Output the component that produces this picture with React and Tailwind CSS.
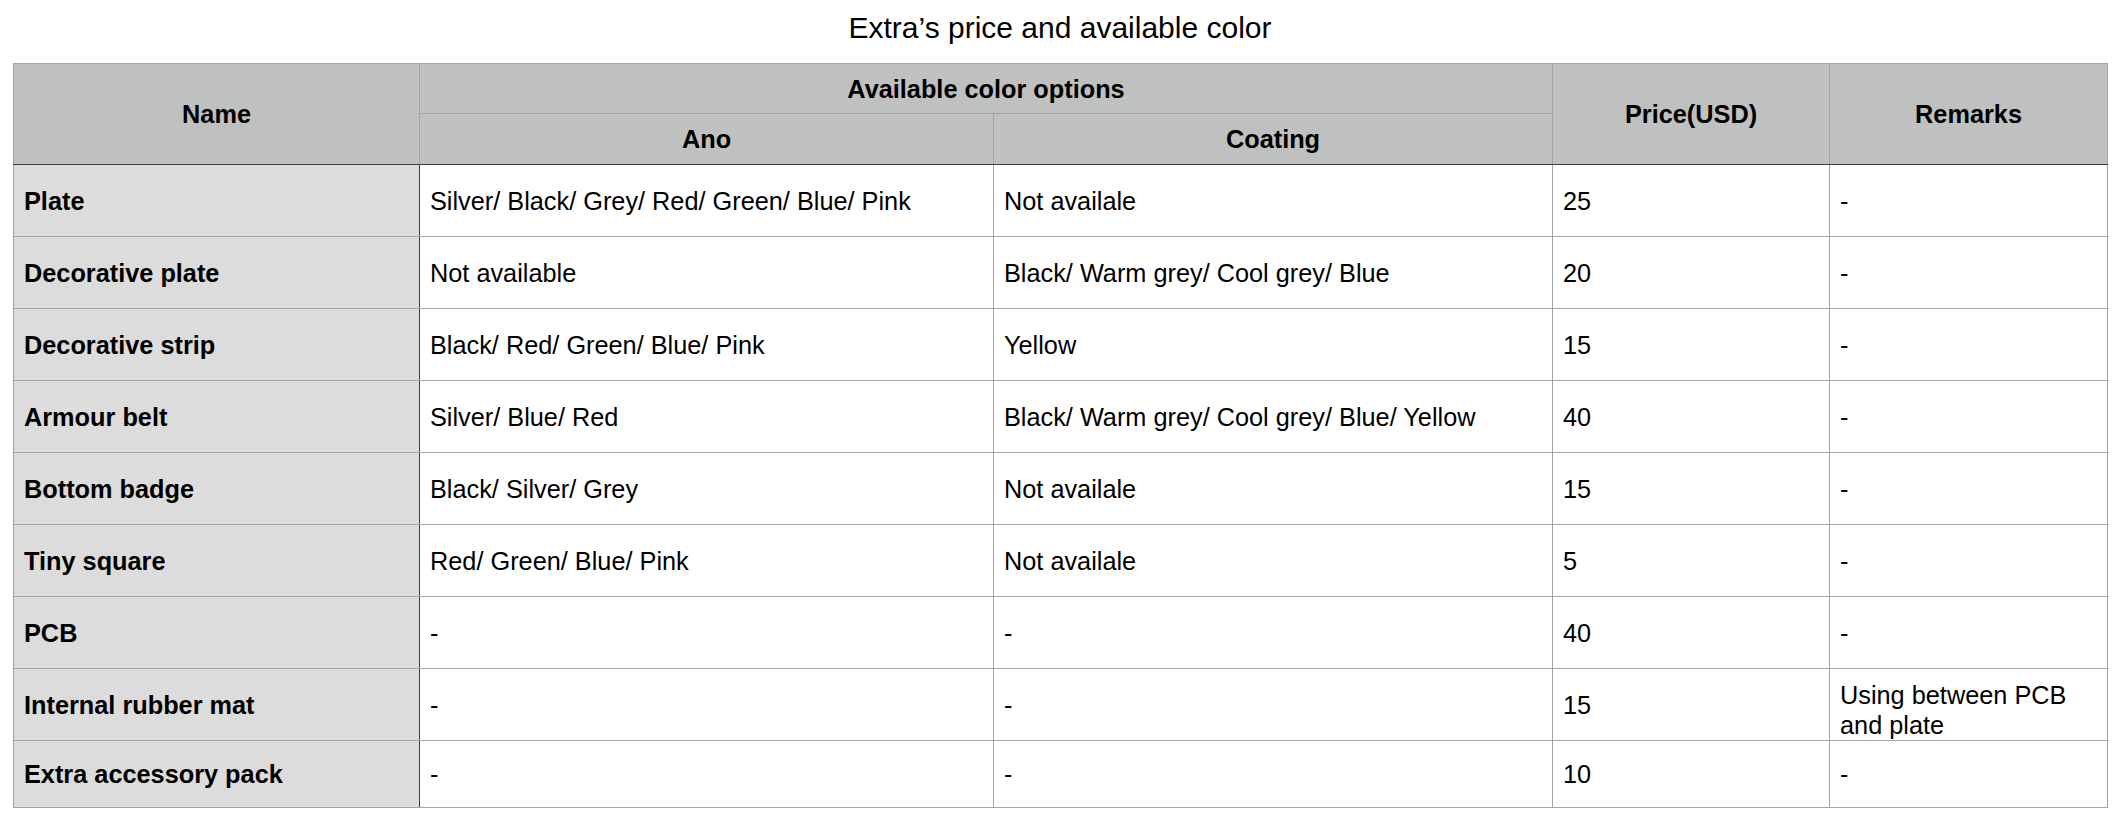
import React from 'react';

const ROWS = [
  ['Plate', 'Silver/ Black/ Grey/ Red/ Green/ Blue/ Pink', 'Not availale', '25', '-'],
  ['Decorative plate', 'Not available', 'Black/ Warm grey/ Cool grey/ Blue', '20', '-'],
  ['Decorative strip', 'Black/ Red/ Green/ Blue/ Pink', 'Yellow', '15', '-'],
  ['Armour belt', 'Silver/ Blue/ Red', 'Black/ Warm grey/ Cool grey/ Blue/ Yellow', '40', '-'],
  ['Bottom badge', 'Black/ Silver/ Grey', 'Not availale', '15', '-'],
  ['Tiny square', 'Red/ Green/ Blue/ Pink', 'Not availale', '5', '-'],
  ['PCB', '-', '-', '40', '-'],
  ['Internal rubber mat', '-', '-', '15', 'Using between PCB and plate'],
  ['Extra accessory pack', '-', '-', '10', '-'],
];

const App = () => {
  return (
    <div
      className="min-h-screen bg-white text-black"
      style={{ fontFamily: '"Liberation Sans", Arial, sans-serif' }}
    >
      <div className="ml-[13px] w-[2094px]">
        <h1 className="pt-[10px] text-center text-[30px] font-normal leading-[36px]">
          Extra’s price and available color
        </h1>

        <table className="mt-[17px] w-[2094px] table-fixed border-collapse border border-[#a4a4a4] text-[25.3px] leading-[30px]">
          <colgroup>
            <col className="w-[406px]" />
            <col className="w-[574px]" />
            <col className="w-[559px]" />
            <col className="w-[277px]" />
            <col className="w-[278px]" />
          </colgroup>
          <thead className="bg-[#bfc1c0] font-bold">
            <tr className="h-[50px]">
              <th rowSpan={2} className="border border-b-[#3e3e3e] border-[#a4a4a4] px-[10px] text-center font-bold">
                Name
              </th>
              <th colSpan={2} className="border border-[#a4a4a4] px-[10px] text-center font-bold">
                Available color options
              </th>
              <th rowSpan={2} className="border border-b-[#3e3e3e] border-[#a4a4a4] px-[10px] text-center font-bold">
                Price(USD)
              </th>
              <th rowSpan={2} className="border border-b-[#3e3e3e] border-[#a4a4a4] px-[10px] text-center font-bold">
                Remarks
              </th>
            </tr>
            <tr className="h-[51px]">
              <th className="border border-b-[#3e3e3e] border-[#a4a4a4] px-[10px] text-center font-bold">Ano</th>
              <th className="border border-b-[#3e3e3e] border-[#a4a4a4] px-[10px] text-center font-bold">Coating</th>
            </tr>
          </thead>
          <tbody>
            {ROWS.map((row, i) => (
              <tr key={row[0]} className={i === ROWS.length - 1 ? 'h-[67px]' : 'h-[72px]'}>
                <td className="border border-[#a4a4a4] border-r-[#404040] bg-[#dcdcdc] px-[10px] align-middle font-bold">
                  {row[0]}
                </td>
                {row.slice(1).map((cell, j) => (
                  <td
                    key={j}
                    className={
                      cell.length > 20 && j === 3
                        ? 'border border-[#a4a4a4] px-[10px] pt-[10px] align-middle'
                        : 'border border-[#a4a4a4] px-[10px] align-middle'
                    }
                  >
                    {cell}
                  </td>
                ))}
              </tr>
            ))}
          </tbody>
        </table>
      </div>
    </div>
  );
};

export default App;
